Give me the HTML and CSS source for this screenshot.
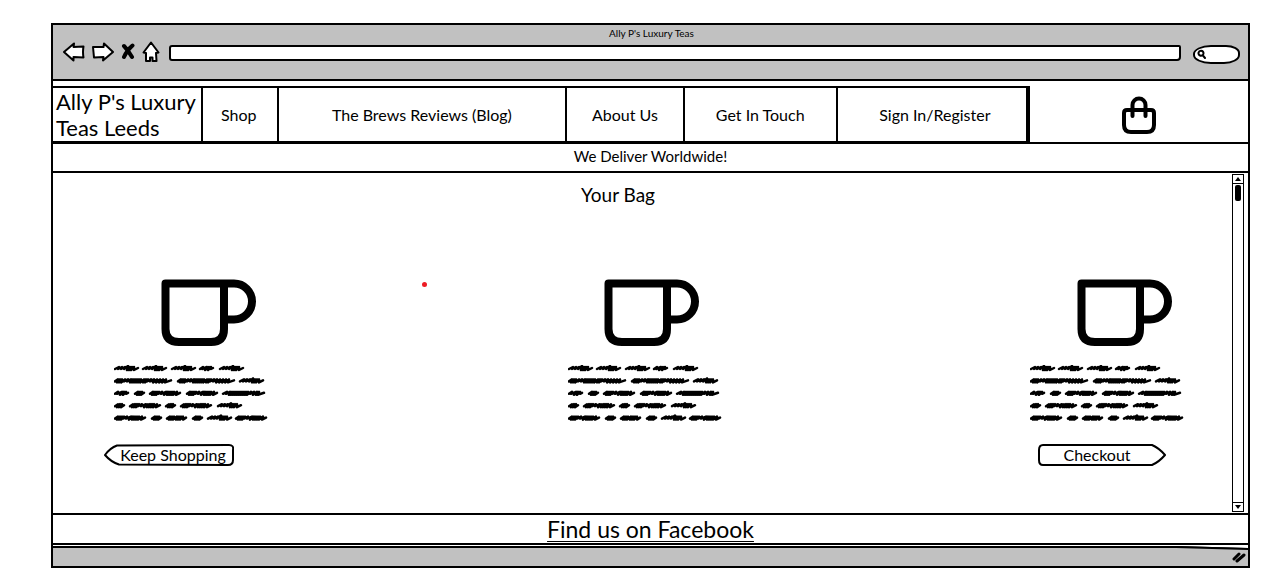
FILE: index.html
```html
<!DOCTYPE html>
<html lang="en">
<head>
<meta charset="utf-8">
<title>Ally P's Luxury Teas</title>
<link rel="stylesheet" href="styles.css">
</head>
<body>
<svg class="sprites" aria-hidden="true">
  <defs>
    <path id="w10" d="M1 4l3-2-1 3 3-3-1 3 3-3-1 3 3-2"/>
    <path id="w15" d="M1 4l3-2-1 2 5-2-2 3 4-3-1 3 3-3 0 2 2-1"/>
    <path id="w22" d="M1 4l3-2-1 3 3-3-1 3 3-3-1 3 4-3-1 3 3-3-1 3 3-3-1 3 3-3 0 3 3-2"/>
    <path id="w24" d="M1 4l4-2-1 2 4-2-1 2 4-2-1 2 4-3-1 4 3-3-1 3 3-3-1 3 3-3 0 3 4-2"/>
    <path id="w32" d="M1 4l3-2-1 3 3-3-1 3 3-3-1 3 3-3-1 2 4-2-1 2 5-2-2 3 4-3-1 3 3-3-1 3 3-3-1 3 3-3-1 3 4-3-1 3 4-2"/>
    <path id="w44" d="M1 4l4-2-1 2 4-2-1 3 3-3-1 3 3-3-1 3 3-3-1 3 3-3-1 3 3-3-1 3 3-3-1 3 3-3-1 3 3-3-1 3 3-3-1 3 4-3-1 2 4-2-1 3 4-3-1 3 3-3-1 3 6-2"/>
    <path id="w59" d="M1 4l3-2-1 3 3-3-1 3 3-3-1 3 4-3-1 2 4-2-1 2 4-2-1 3 3-3-1 3 3-3-1 3 3-3-1 3 3-3-1 3 3-3-1 3 4-3-1 3 3-3-1 3 3-3-1 2 4-2-1 2 4-2-1 3 4-3-1 3 4-3-1 3 4-3-1 3 4-3-1 3 6-2"/>
    <symbol id="scribble" viewBox="0 0 156 56">
      <use href="#w24"/><use href="#w24" x="28"/><use href="#w24" x="57"/><use href="#w15" x="85"/><use href="#w24" x="105"/>
      <g transform="translate(0 12.4)"><use href="#w59"/><use href="#w59" x="63"/><use href="#w24" x="125"/></g>
      <g transform="translate(0 24.8)"><use href="#w15"/><use href="#w10" x="20"/><use href="#w32" x="35"/><use href="#w32" x="72"/><use href="#w44" x="108"/></g>
      <g transform="translate(0 37.2)"><use href="#w10"/><use href="#w32" x="15"/><use href="#w10" x="51"/><use href="#w32" x="66"/><use href="#w24" x="103"/></g>
      <g transform="translate(0 49.6)"><use href="#w32"/><use href="#w10" x="37"/><use href="#w22" x="52"/><use href="#w10" x="78"/><use href="#w24" x="93"/><use href="#w32" x="121"/></g>
    </symbol>
    <symbol id="cup" viewBox="0 0 96 68">
      <path d="M4.500 4.500H63V50Q63 63 50 63H18Q4.500 63 4.500 50ZM63 4.500H73A18 18 0 0 1 73 40.500H63"/>
    </symbol>
  </defs>
</svg>

<div class="window">
  <header class="chrome">
    <div class="chrome-title">Ally P's Luxury Teas</div>
    <div class="toolbar">
      <div class="tools">
        <button type="button" class="tool" aria-label="Back"><svg width="22" height="20" viewBox="0 0 22 20"><path class="outlined" d="M1 10L11 1.500 10.500 5 20.500 4.500Q19.500 10 20.500 15.500L10.500 15V18.500Z"/></svg></button>
        <button type="button" class="tool" aria-label="Forward"><svg width="22" height="20" viewBox="0 0 22 20"><path class="outlined" d="M21 10L12 1.500 11.500 5 1 5 2 15.500 11.500 15 11 18.500Z"/></svg></button>
        <button type="button" class="tool" aria-label="Stop"><svg width="14" height="20" viewBox="0 0 14 20"><path class="cross" d="M3 4Q7 8 11 15M11.500 3.500Q6 8 3 15"/></svg></button>
        <button type="button" class="tool" aria-label="Home"><svg width="18" height="22" viewBox="0 0 18 22"><path class="outlined" d="M9 1.500L16.500 11.500 14 12 14.500 20H10.500V16.500H8V20H4V12L1.500 11.500Z"/></svg></button>
      </div>
      <input class="address" type="text" aria-label="Address">
      <label class="search">
        <svg width="9" height="10" viewBox="0 0 9 10" aria-hidden="true"><path d="M6.500 4A2.500 2.500 0 1 0 3 6.500 2.500 2.500 0 0 0 6.500 4ZM5.500 6L8 9"/></svg>
        <input type="search" aria-label="Search">
      </label>
    </div>
  </header>

  <div class="topbar">
    <a class="brand" href="#">Ally P's Luxury Teas Leeds</a>
    <nav class="menu">
      <a href="#">Shop</a>
      <a href="#">The Brews Reviews (Blog)</a>
      <a href="#">About Us</a>
      <a href="#">Get In Touch</a>
      <a href="#">Sign In/Register</a>
    </nav>
    <a class="bag" href="#" aria-label="Bag"><svg width="34" height="38" viewBox="0 0 34 38"><path d="M5 14H29Q32 14 32 17V29Q32 36 25 36H9Q2 36 2 29V17Q2 14 5 14ZM10.500 20V9A6.500 6.500 0 0 1 23.500 9V20"/></svg></a>
  </div>

  <p class="banner">We Deliver Worldwide!</p>

  <div class="page">
    <main class="content">
      <h1>Your Bag</h1>
      <span class="dot"></span>
      <div class="products">
        <article class="product">
          <svg class="cup"><use href="#cup"/></svg>
          <svg class="scribble"><use href="#scribble"/></svg>
          <button type="button" class="action back"><svg viewBox="0 0 130 22" preserveAspectRatio="none" aria-hidden="true"><path d="M13 1.500L125 1Q130 1 129 6L129 16Q129 21 124 21L15 20.500Q7 18 1 11 6 4 13 1.500Z"/></svg><span>Keep Shopping</span></button>
        </article>
        <article class="product middle">
          <svg class="cup"><use href="#cup"/></svg>
          <svg class="scribble"><use href="#scribble"/></svg>
        </article>
        <article class="product">
          <svg class="cup"><use href="#cup"/></svg>
          <svg class="scribble"><use href="#scribble"/></svg>
          <button type="button" class="action next"><svg viewBox="0 0 128 22" preserveAspectRatio="none" aria-hidden="true"><path d="M5 1L114 1Q121 4 127 11 121 18 114 21L5 21Q1 21 1 16V6Q1 1 5 1Z"/></svg><span>Checkout</span></button>
        </article>
      </div>
    </main>
    <div class="scrollbar">
      <button type="button" aria-label="Scroll up"><svg width="6" height="4" viewBox="0 0 6 4"><path d="M3 0L6 4H0Z"/></svg></button>
      <div class="track"><div class="thumb"></div></div>
      <button type="button" aria-label="Scroll down"><svg width="6" height="4" viewBox="0 0 6 4"><path d="M0 0H6L3 4Z"/></svg></button>
    </div>
  </div>

  <footer class="social"><a href="#">Find us on Facebook</a></footer>

  <div class="status">
    <svg class="slant" width="72" height="4" viewBox="0 0 72 4" aria-hidden="true"><path class="wedge" d="M0 0H72V2Z"/><path d="M0 1L72 3"/></svg>
    <svg class="grip" width="14" height="12" viewBox="0 0 14 12" aria-hidden="true"><path d="M2 8L7 3M5 10L12 4"/></svg>
  </div>
</div>
</body>
</html>
```
FILE: styles.css
```css
* { box-sizing: border-box; }

body {
  margin: 0;
  min-height: 100vh;
  display: flex;
  background: #fff;
  color: #000;
  font: 16px/20px Lato, "Open Sans", sans-serif;
}

a { color: inherit; text-decoration: none; }
svg { display: block; fill: none; stroke: #000; stroke-width: 2; stroke-linejoin: round; stroke-linecap: round; }
button { padding: 0; border: 0; background: none; color: inherit; font: inherit; }
input { min-width: 0; border: 0; font: inherit; }
.sprites { position: absolute; width: 0; height: 0; }

.window {
  flex: 1;
  display: flex;
  flex-direction: column;
  margin: 23px 20px 14px 51px;
  border: 2px solid #000;
}

/* browser bar */
.chrome { padding: 2px 8px 14px 10px; background: #c1c1c1; border-bottom: 2px solid #000; }
.chrome-title { font-size: 10px; line-height: 12px; text-align: center; }
.toolbar { display: flex; align-items: center; gap: 12px; height: 26px; }
.tools { display: flex; align-items: center; gap: 7px; margin-right: -3px; }
.address { flex: 1; height: 16px; margin-top: 2px; background: #fff; border: 2px solid #000; border-radius: 3px 2px 4px 3px; }
.search {
  display: flex;
  align-items: center;
  width: 47px;
  height: 19px;
  margin-top: 4px;
  padding: 0 8px 0 2px;
  background: #fff;
  border: 2px solid #000;
  border-radius: 18px 14px 16px 18px / 9px 8px 9px 9px;
}
.search input { width: 100%; height: 12px; background: none; appearance: none; }
.search svg { flex: none; }
.outlined { fill: #fff; }
.cross { stroke-width: 4; }

/* site navigation */
.topbar { display: grid; grid-template-columns: 152fr 828fr 218fr; height: 55px; margin: 5px 0 0 -2px; }
.brand {
  padding: 1px 0 0 3px;
  border: 2px solid #000;
  font-size: 22px;
  line-height: 26px;
  margin-bottom: 1px;
}
.menu {
  display: grid;
  grid-template-columns: 76fr 289fr 118fr 153fr 189fr;
  border-top: 2px solid #000;
  border-right: 4px solid #000;
  border-bottom: 3px solid #000;
}
.menu a { display: flex; align-items: center; justify-content: center; border-right: 2px solid #000; }
.menu a:first-child { padding-right: 2px; }
.menu a:last-child { padding-left: 6px; border-right: 0; }
.bag { display: flex; align-items: center; justify-content: center; }
.bag svg { stroke-width: 4; }

.banner {
  margin: 1px 0 0 -2px;
  padding: 2px 0 5px;
  border: 2px solid #000;
  border-right: 0;
  font-size: 15px;
  text-align: center;
}

/* bag */
.page { flex: 1; display: flex; }
.content { flex: 1; position: relative; padding: 10px 48px 46px 61px; }
h1 { margin: 0 62px 0 0; font-size: 19px; line-height: 24px; font-weight: 400; text-align: center; }
.dot { position: absolute; left: 31.300%; top: 109px; width: 5px; height: 5px; border-radius: 50%; background: #ed1c24; }
.products { display: grid; grid-template-columns: 454fr 462fr 154px; margin-top: 72px; }
.product { display: flex; flex-direction: column; align-items: flex-start; }
.cup { width: 96px; height: 68px; margin-left: 47px; stroke-width: 8; }
.middle .cup { margin-left: 36px; }
.scribble { width: 156px; height: 56px; margin-top: 18px; stroke-width: 2.500; }
.action { position: relative; height: 22px; margin-top: 23px; }
.action svg { position: absolute; inset: 0; width: 100%; height: 100%; }
.action span { position: relative; }
.back { width: 130px; margin-left: -10px; padding-left: 8px; }
.next { width: 128px; margin-left: 8px; padding-right: 10px; }

.scrollbar { display: flex; flex-direction: column; width: 12px; margin: 1px 4px 1px 0; border: 1px solid #000; }
.scrollbar button { display: flex; align-items: center; justify-content: center; height: 8px; }
.scrollbar svg { fill: #000; stroke: none; }
.track { flex: 1; padding: 1px 2px; border: solid #000; border-width: 1px 0; }
.thumb { height: 16px; border-radius: 2px; background: #000; }

.social { border: solid #000; border-width: 2px 0; padding: 1px 0; font-size: 23px; line-height: 26px; text-align: center; }
.social a { text-decoration: underline; text-decoration-thickness: 1px; text-underline-offset: 3px; }

.status {
  position: relative;
  display: flex;
  justify-content: flex-end;
  align-items: center;
  height: 20px;
  margin-top: 1px;
  padding-right: 2px;
  border-top: 2px solid #000;
  background: #c1c1c1;
}
.slant { position: absolute; right: 0; top: -2px; }
.wedge { fill: #fff; stroke: none; }
.grip { stroke-width: 3; }
```
